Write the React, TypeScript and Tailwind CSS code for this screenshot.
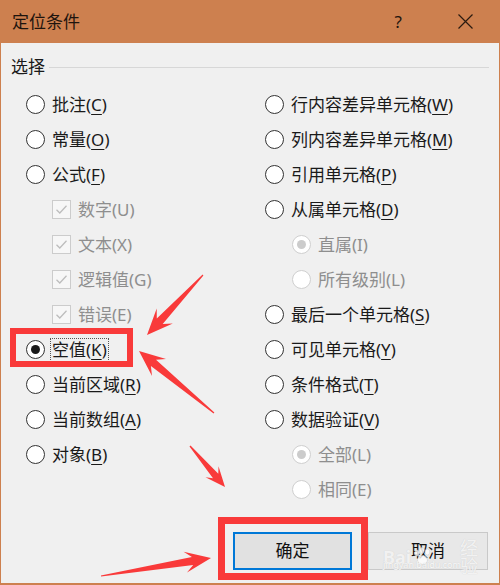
import clsx from "clsx";

type Item = {
  kind: "radio" | "check" | "sub";
  label: string;
  hot?: string;
  checked?: boolean;
  disabled?: boolean;
  focus?: boolean;
};

const LEFT: Item[] = [
  { kind: "radio", label: "批注", hot: "C" },
  { kind: "radio", label: "常量", hot: "O" },
  { kind: "radio", label: "公式", hot: "F" },
  { kind: "check", label: "数字(U)", checked: true, disabled: true },
  { kind: "check", label: "文本(X)", checked: true, disabled: true },
  { kind: "check", label: "逻辑值(G)", checked: true, disabled: true },
  { kind: "check", label: "错误(E)", checked: true, disabled: true },
  { kind: "radio", label: "空值", hot: "K", checked: true, focus: true },
  { kind: "radio", label: "当前区域", hot: "R" },
  { kind: "radio", label: "当前数组", hot: "A" },
  { kind: "radio", label: "对象", hot: "B" },
];

const RIGHT: Item[] = [
  { kind: "radio", label: "行内容差异单元格", hot: "W" },
  { kind: "radio", label: "列内容差异单元格", hot: "M" },
  { kind: "radio", label: "引用单元格", hot: "P" },
  { kind: "radio", label: "从属单元格", hot: "D" },
  { kind: "sub", label: "直属(I)", checked: true, disabled: true },
  { kind: "sub", label: "所有级别(L)", disabled: true },
  { kind: "radio", label: "最后一个单元格", hot: "S" },
  { kind: "radio", label: "可见单元格", hot: "Y" },
  { kind: "radio", label: "条件格式", hot: "T" },
  { kind: "radio", label: "数据验证", hot: "V" },
  { kind: "sub", label: "全部(L)", checked: true, disabled: true },
  { kind: "sub", label: "相同(E)", disabled: true },
];

function Radio({ checked, disabled }: { checked?: boolean; disabled?: boolean }) {
  return (
    <span
      className={clsx(
        "flex h-[19px] w-[19px] shrink-0 items-center justify-center rounded-full border bg-white",
        disabled ? "border-[#cfcfcf]" : "border-[#333333]",
      )}
    >
      {checked && (
        <span className={clsx("h-[9px] w-[9px] rounded-full", disabled ? "bg-[#cccccc]" : "bg-[#1a1a1a]")} />
      )}
    </span>
  );
}

function Check() {
  return (
    <span className="flex h-[19px] w-[19px] shrink-0 items-center justify-center border border-[#cccccc] bg-[#f7f7f7]">
      <svg width="13" height="13" viewBox="0 0 13 13" fill="none">
        <path d="M1.5 6.8 L4.8 10 L11.5 2.8" stroke="#bdbdbd" strokeWidth="1.3" />
      </svg>
    </span>
  );
}

function Row({ item }: { item: Item }) {
  const indent = item.kind === "check" ? "pl-[26px]" : item.kind === "sub" ? "pl-[27px]" : "";
  return (
    <div className={clsx("flex h-[35px] items-center gap-[7px]", indent)}>
      {item.kind === "check" ? <Check /> : <Radio checked={item.checked} disabled={item.disabled} />}
      <span
        className={clsx(
          "whitespace-nowrap leading-[22px]",
          item.disabled ? "text-[#8e8e8e]" : "text-[#1a1a1a]",
          item.focus && "-mx-[2px] border border-dotted border-[#555555] px-[1px]",
        )}
      >
        {item.label}
        {item.hot && (
          <>
            (<span className="underline decoration-1 underline-offset-[3px]">{item.hot}</span>)
          </>
        )}
      </span>
    </div>
  );
}

type P = [number, number];

function arrowPoints(tail: P, tip: P, headLen: number, headW: number, neckW: number) {
  const dx = tip[0] - tail[0];
  const dy = tip[1] - tail[1];
  const len = Math.hypot(dx, dy);
  const ux = dx / len;
  const uy = dy / len;
  const nx = -uy;
  const ny = ux;
  const at = (d: number, w: number): P => [tip[0] - ux * d + nx * w, tip[1] - uy * d + ny * w];
  const pts: P[] = [
    at(len, 0.6),
    at(headLen * 0.72, neckW / 2),
    at(headLen, headW / 2),
    tip,
    at(headLen, -headW / 2),
    at(headLen * 0.72, -neckW / 2),
    at(len, -0.6),
  ];
  return pts.map((p) => p.map((v) => v.toFixed(1)).join(",")).join(" ");
}

export default function App() {
  return (
    <div className="relative flex h-[585px] w-[500px] flex-col overflow-hidden bg-[#f0f0f0] font-['Noto_Sans','Noto_Sans_CJK_SC',sans-serif] text-[17px]">
      {/* Title bar */}
      <div className="flex h-[43px] shrink-0 items-center bg-[#cd804f] pl-[12px] text-[#1e140e]">
        <span className="text-[17px]">定位条件</span>
        <span className="ml-auto mr-[56px] text-[17px]">?</span>
        <svg width="15" height="15" viewBox="0 0 15 15" className="mr-[27px]">
          <path d="M0.5 0.5 L14.5 14.5 M14.5 0.5 L0.5 14.5" stroke="#2a1a10" strokeWidth="1.2" />
        </svg>
      </div>

      {/* Body */}
      <div className="flex flex-1 flex-col border-x border-b-2 border-[#cd804f]">
        <div className="mt-[12px] flex h-[24px] items-center pl-[10px] pr-[10px]">
          <span className="text-[#1a1a1a]">选择</span>
          <span className="ml-[4px] h-px flex-1 bg-[#d7d7d7]" />
        </div>

        <div className="mt-[8px] flex pl-[25px]">
          <div className="w-[239px]">
            {LEFT.map((it) => (
              <Row key={it.label} item={it} />
            ))}
          </div>
          <div className="flex-1">
            {RIGHT.map((it) => (
              <Row key={it.label} item={it} />
            ))}
          </div>
        </div>

        <div className="mt-[25px] flex justify-end gap-[16px] pr-[11px]">
          <button className="h-[38px] w-[119px] border-2 border-[#0078d7] bg-[#e1e1e1] text-[#111111]">确定</button>
          <button className="relative h-[38px] w-[120px] border border-[#c9c9c9] bg-[#e8e8e8] text-[#111111]">
            取消
            <span className="absolute left-[14px] top-[6px] flex items-center text-[18px] font-bold leading-none text-white/75 [text-shadow:0_0_1px_#c8c8c8]">
              Bai
              <svg width="22" height="20" viewBox="0 0 22 20" className="mx-[1px]">
                <g fill="#ffffff" stroke="#cfcfcf" strokeWidth="0.6" opacity="0.8">
                  <ellipse cx="5" cy="6" rx="2.3" ry="3" />
                  <ellipse cx="10" cy="3.5" rx="2.3" ry="3" />
                  <ellipse cx="15.5" cy="5" rx="2.3" ry="3" />
                  <ellipse cx="10.5" cy="13" rx="5" ry="4.5" />
                </g>
              </svg>
              <span className="ml-[16px] font-normal">经验</span>
            </span>
            <span className="absolute left-[14px] top-[27px] text-[9px] leading-none text-white/90 [text-shadow:0_0_1px_#bbbbbb]">
              jingyan.baidu.com
            </span>
          </button>
        </div>
      </div>

      {/* Annotation boxes */}
      <div className="pointer-events-none absolute left-[10px] top-[328px] h-[39px] w-[123px] border-[6px] border-[#f93a3a]" />
      <div className="pointer-events-none absolute left-[218px] top-[517px] h-[63px] w-[150px] border-[7px] border-[#f93a3a]" />

      {/* Annotation arrows */}
      <svg className="pointer-events-none absolute inset-0" width="500" height="585" viewBox="0 0 500 585">
        <g fill="#f93a3a">
          <polygon points={arrowPoints([203, 275], [147, 335], 26, 22, 8)} />
          <polygon points={arrowPoints([214, 413], [139, 351], 26, 22, 8)} />
          <polygon points={arrowPoints([190, 446], [225, 487], 20, 17, 7)} />
          <polygon points={arrowPoints([101, 576], [211, 558], 26, 21, 8)} />
        </g>
      </svg>
    </div>
  );
}
